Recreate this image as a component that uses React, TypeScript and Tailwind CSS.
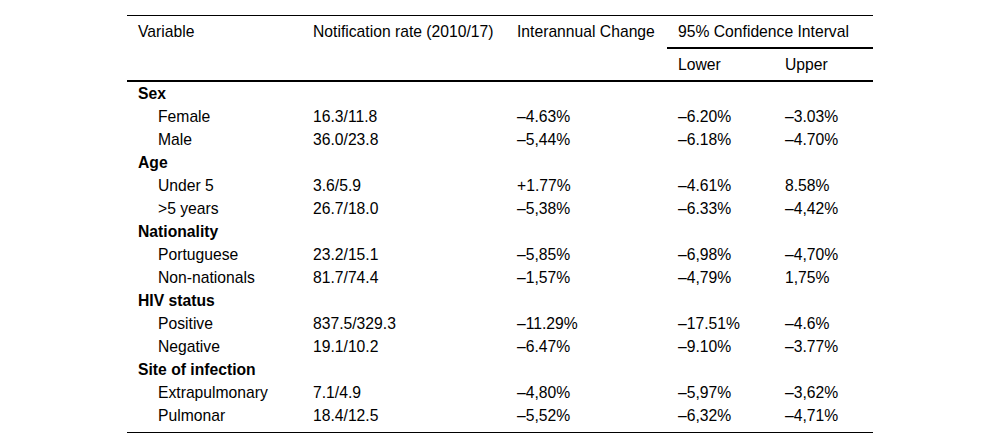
import React from "react";

const groups = [
  {
    name: "Sex",
    rows: [
      ["Female", "16.3/11.8", "–4.63%", "–6.20%", "–3.03%"],
      ["Male", "36.0/23.8", "–5,44%", "–6.18%", "–4.70%"],
    ],
  },
  {
    name: "Age",
    rows: [
      ["Under 5", "3.6/5.9", "+1.77%", "–4.61%", "8.58%"],
      [">5 years", "26.7/18.0", "–5,38%", "–6.33%", "–4,42%"],
    ],
  },
  {
    name: "Nationality",
    rows: [
      ["Portuguese", "23.2/15.1", "–5,85%", "–6,98%", "–4,70%"],
      ["Non-nationals", "81.7/74.4", "–1,57%", "–4,79%", "1,75%"],
    ],
  },
  {
    name: "HIV status",
    rows: [
      ["Positive", "837.5/329.3", "–11.29%", "–17.51%", "–4.6%"],
      ["Negative", "19.1/10.2", "–6.47%", "–9.10%", "–3.77%"],
    ],
  },
  {
    name: "Site of infection",
    rows: [
      ["Extrapulmonary", "7.1/4.9", "–4,80%", "–5,97%", "–3,62%"],
      ["Pulmonar", "18.4/12.5", "–5,52%", "–6,32%", "–4,71%"],
    ],
  },
];

const cols = "grid grid-cols-[175px_204px_161px_107px_99px]";

export default function App() {
  return (
    <div className="min-h-[448px] w-full bg-white pt-[15px] text-[15.7px] leading-none text-black font-['Liberation_Sans',Arial,sans-serif]">
      <div className="mx-auto w-[746px] border-y border-black">
        {/* header */}
        <div className={`${cols} border-b-2 border-black`}>
          <div className="flex h-[33px] items-center pb-[2px] pl-[11px]">Variable</div>
          <div className="flex h-[33px] items-center pb-[2px] pl-[11px]">Notification rate (2010/17)</div>
          <div className="flex h-[33px] items-center pb-[2px] pl-[11px]">Interannual Change</div>
          <div className="col-span-2 flex h-[33px] items-center border-b-2 border-black pl-[11px]">
            95% Confidence Interval
          </div>
          <div className="h-[31px]" />
          <div className="h-[31px]" />
          <div className="h-[31px]" />
          <div className="flex h-[31px] items-center pl-[11px]">Lower</div>
          <div className="flex h-[31px] items-center pl-[11px]">Upper</div>
        </div>
        {/* body */}
        <div className="pb-[5px]">
          {groups.map((g) => (
            <React.Fragment key={g.name}>
              <div className={cols}>
                <div className="col-span-5 flex h-[23px] items-center pl-[11px] font-bold">{g.name}</div>
              </div>
              {g.rows.map((r) => (
                <div key={r[0]} className={cols}>
                  <div className="flex h-[23px] items-center pl-[31px]">{r[0]}</div>
                  <div className="flex h-[23px] items-center pl-[11px]">{r[1]}</div>
                  <div className="flex h-[23px] items-center pl-[11px]">{r[2]}</div>
                  <div className="flex h-[23px] items-center pl-[11px]">{r[3]}</div>
                  <div className="flex h-[23px] items-center pl-[11px]">{r[4]}</div>
                </div>
              ))}
            </React.Fragment>
          ))}
        </div>
      </div>
    </div>
  );
}
